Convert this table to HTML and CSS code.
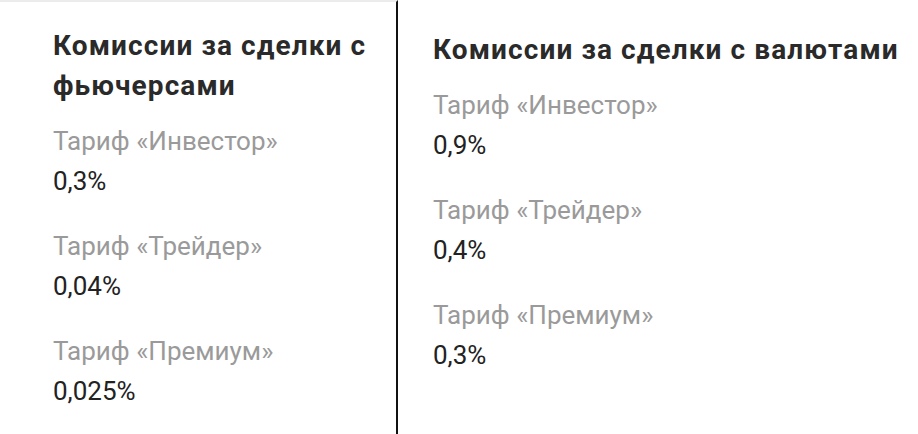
FILE: index.html
```html
<!DOCTYPE html>
<html lang="ru">
<head>
<meta charset="utf-8">
<link rel="stylesheet" href="styles.css">
</head>
<body>
<div class="page">
  <section class="col col-left">
    <h2 class="title">Комиссии за сделки с фьючерсами</h2>
    <div class="item"><div class="label">Тариф «Инвестор»</div><div class="value">0,3%</div></div>
    <div class="item"><div class="label">Тариф «Трейдер»</div><div class="value">0,04%</div></div>
    <div class="item"><div class="label">Тариф «Премиум»</div><div class="value">0,025%</div></div>
  </section>
  <section class="col col-right">
    <h2 class="title">Комиссии за сделки с валютами</h2>
    <div class="item"><div class="label">Тариф «Инвестор»</div><div class="value">0,9%</div></div>
    <div class="item"><div class="label">Тариф «Трейдер»</div><div class="value">0,4%</div></div>
    <div class="item"><div class="label">Тариф «Премиум»</div><div class="value">0,3%</div></div>
  </section>
</div>
</body>
</html>
```
FILE: styles.css
```css
html, body {
  margin: 0;
  padding: 0;
  background: #ffffff;
}
body {
  font-family: Roboto, "Noto Sans", sans-serif;
  width: 918px;
  height: 434px;
  overflow: hidden;
}
.page {
  display: flex;
  height: 434px;
}
.col {
  box-sizing: border-box;
}
.col-left {
  width: 398px;
  padding: 24px 10px 0 53px;
  border-right: 2px solid #111;
  border-top: 2px solid #ececec;
}
.col-right {
  flex: 1;
  padding: 30px 0 0 35px;
}
.title {
  margin: 0 0 15px;
  font-size: 28px;
  line-height: 40px;
  font-weight: 700;
  letter-spacing: 1.1px;
  color: #2a2a2a;
  white-space: normal;
}
.item {
  margin-bottom: 25px;
}
.label {
  font-size: 26px;
  line-height: 40px;
  color: #9a9a9a;
}
.value {
  font-size: 26px;
  line-height: 40px;
  color: #222;
}
```
